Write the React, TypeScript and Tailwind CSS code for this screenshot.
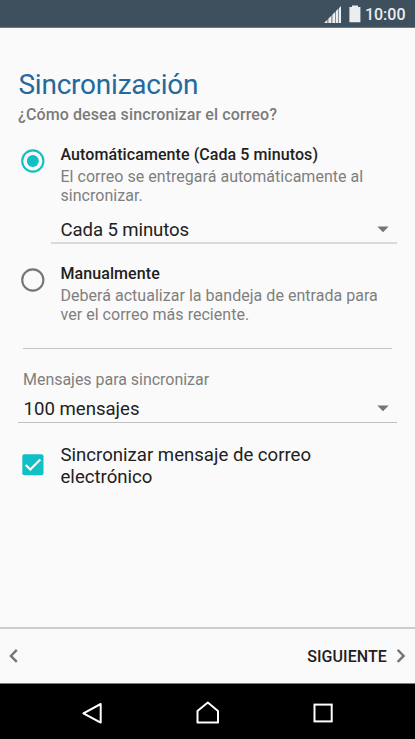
import clsx from 'clsx';

type RadioOptionProps = {
  title: string;
  lines: string[];
  checked?: boolean;
};

function RadioIcon({ checked }: { checked?: boolean }) {
  return (
    <svg
      width="24"
      height="24"
      viewBox="0 0 24 24"
      className={clsx('shrink-0', checked ? 'text-[#12bfc7]' : 'text-[#757575]')}
    >
      <circle cx="11.8" cy="12" r="10.6" fill="none" stroke="currentColor" strokeWidth="2.1" />
      {checked && <circle cx="11.8" cy="12" r="6" fill="currentColor" />}
    </svg>
  );
}

function RadioOption({ title, lines, checked }: RadioOptionProps) {
  return (
    <div className="flex items-start gap-[15.5px] pl-[21px]">
      <div className="pt-1">
        <RadioIcon checked={checked} />
      </div>
      <div className="whitespace-nowrap">
        <h2 className="text-base leading-5 font-medium tracking-[0.08px] text-[#212121]">
          {title}
        </h2>
        <p className="mt-0.5 text-base leading-[19px] tracking-[0.03px] text-[#7f7f7f]">
          {lines.map((line) => (
            <span key={line} className="block">
              {line}
            </span>
          ))}
        </p>
      </div>
    </div>
  );
}

function Caret() {
  return (
    <svg width="12" height="7" viewBox="0 0 12 7" className="text-[#757575]">
      <path d="M0.3 0.6h11.4L6 6.3z" fill="currentColor" />
    </svg>
  );
}

function StatusBar() {
  return (
    <header className="flex h-7 items-center justify-end border-b border-[#6b7a86] bg-[#3e4f5d] pr-[9.5px] text-[#ebedef]">
      <svg width="18" height="18" viewBox="0 0 18 18" fill="currentColor">
        <path d="M0 18L3.5 14.5V18zM4.3 13.7L7.5 10.5V18H4.3zM8.3 9.7L11.3 6.7V18H8.3zM11.9 6.1L14.2 3.8V18H11.9zM14.8 3.2L17 1V18H14.8z" />
      </svg>
      <svg width="12" height="18" viewBox="0 0 12 18" fill="currentColor" className="ml-[7px]">
        <path d="M3 0.5h6v1.6h2.4v15.2H0.4V2.1H3z" />
      </svg>
      <span className="ml-1 pt-0.5 text-base leading-5 font-medium">10:00</span>
    </header>
  );
}

function NavBar() {
  return (
    <nav className="flex h-14 justify-center border-t border-[#7d7d7d] bg-black text-white">
      <svg width="415" height="55" viewBox="0 684 415 55" fill="none" stroke="currentColor" strokeWidth="2">
        <path d="M100.7 704v18.6L83.4 713.3z" strokeLinejoin="round" />
        <path d="M197.5 722.6V711L207.8 702.6 218 711v11.6z" strokeLinejoin="round" />
        <rect x="314.5" y="704.6" width="17.2" height="16.8" />
      </svg>
    </nav>
  );
}

export default function App() {
  return (
    <div className="flex h-[739px] w-[415px] flex-col overflow-hidden bg-[#fafafa] font-[Roboto,sans-serif]">
      <StatusBar />

      <main className="flex-1 pt-10">
        <h1 className="pl-[18.4px] text-[28px] leading-[33px] tracking-[-0.22px] text-[#24699d]">
          Sincronización
        </h1>
        <p className="mt-1 pl-[18px] text-base leading-[19px] font-medium tracking-[0.11px] text-[#7b7b7b]">
          ¿Cómo desea sincronizar el correo?
        </p>

        <div className="mt-[21px]">
          <RadioOption
            checked
            title="Automáticamente (Cada 5 minutos)"
            lines={['El correo se entregará automáticamente al', 'sincronizar.']}
          />
        </div>
        <div className="mt-3.5 mr-[18px] ml-[51px] flex h-[25px] items-start justify-between border-b-2 border-[#dadada] pr-2 pl-[9.5px] text-[18.6px] leading-[22px] tracking-[-0.1px] text-[#212121]">
          <span>Cada 5 minutos</span>
          <span className="pt-[7px] leading-none">
            <Caret />
          </span>
        </div>

        <div className="mt-5">
          <RadioOption
            title="Manualmente"
            lines={['Deberá actualizar la bandeja de entrada para', 'ver el correo más reciente.']}
          />
        </div>

        <hr className="mt-6 mr-[23px] ml-[23px] border-[#c4c4c4]" />

        <p className="mt-[21px] pl-[23px] text-base leading-[19px] tracking-[-0.03px] text-[#7f7f7f]">
          Mensajes para sincronizar
        </p>
        <div className="mt-2 mr-[18px] ml-[18px] flex h-[26px] items-start justify-between border-b border-[#c0c0c0] pr-2 pl-[5.5px] text-[18.6px] leading-[22px] text-[#212121]">
          <span className="pt-px">100 mensajes</span>
          <span className="pt-[8px] leading-none">
            <Caret />
          </span>
        </div>

        <label className="mt-[21px] flex items-center gap-[16.5px] pl-[22px]">
          <svg width="22" height="22" viewBox="0 0 22 22" className="mb-0.5 shrink-0">
            <rect x="0.3" y="0.3" width="21.2" height="21" rx="2" fill="#12bfc7" />
            <path d="M3.7 11L8.3 15.6 18.3 5.6" fill="none" stroke="#fff" strokeWidth="2.1" />
          </svg>
          <span className="text-[18.6px] leading-[22px] text-[#212121]">
            Sincronizar mensaje de correo
            <br />
            electrónico
          </span>
        </label>
      </main>

      <footer className="flex h-14 items-center justify-between border-t-2 border-[#cbcbcb] pr-[9px] pl-[9px] text-[#757575]">
        <svg width="10" height="16" viewBox="0 0 10 16" fill="none" stroke="currentColor" strokeWidth="2.4">
          <path d="M7.8 1.9L1.9 7.9 7.8 13.9" />
        </svg>
        <div className="flex items-center gap-[9px]">
          <span className="pt-px text-base font-medium tracking-[0.08px] text-[#212121]">SIGUIENTE</span>
          <svg width="10" height="16" viewBox="0 0 10 16" fill="none" stroke="currentColor" strokeWidth="2.4">
            <path d="M1.7 1.9L7.6 7.9 1.7 13.9" />
          </svg>
        </div>
      </footer>
      <NavBar />
    </div>
  );
}
